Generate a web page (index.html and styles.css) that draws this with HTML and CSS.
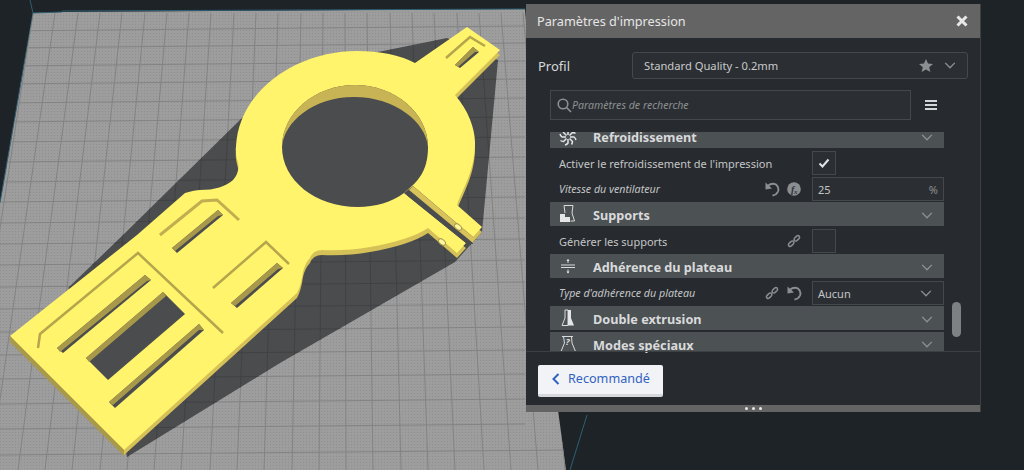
FILE: index.html
```html
<!DOCTYPE html>
<html lang="fr">
<head>
    <meta charset="UTF-8">
    <meta name="viewport" content="width=device-width, initial-scale=1.0">
    <title>Paramètres d'impression</title>
    <link rel="stylesheet" href="styles.css">
</head>
<body>
<div class="viewport">
    <svg class="scene" width="1024" height="470" viewBox="0 0 1024 470">
        <defs>
            <pattern id="fine" width="3" height="3" patternUnits="userSpaceOnUse">
                <rect width="3" height="3" fill="#9d9d9d"/>
                <rect width="1" height="1" fill="#8f8f8f"/>
            </pattern>
            <clipPath id="plateClip">
                <path d="M33 13 L62 12 L525 9 L558 410 L566 470 L0 470 L0 203 Z"/>
            </clipPath>
            <clipPath id="shadowClip">
                <path d="M127 457 L280 363 L455 262 L482 232 L498 60 L447 38 L378 52 L357 60 L242 118 L123 235 L68 288 L100 320 Z"/>
            </clipPath>
            <path id="partFace" fill-rule="evenodd" d="M10 336 L137 235 L185 193 Q195 190 200 190 Q222 190 233 180 Q240 172 238 163 Q235 152 236 147 C238 92 295 51 357 51 Q392 51 415 63 L467 27 L500 50 L455 95 C468 110 475 128 475 143 C475 170 463 188 457 205 L482 227 L473 237 L413 186 L404 193 L466 243 L457 253 L428 228 Q410 240 370 247 Q347 251 322 250 Q313 250 310 258 Q305 263 303 272 Q301 286 297 293 L124 450 Z"/>
        </defs>

        <!-- build plate -->
        <path d="M33 13 L62 12 L525 9 L558 410 L566 470 L0 470 L0 203 Z" fill="url(#fine)"/>
        <path class="plate-edge" d="M30 0 L33 13 L0 203 M33 13 L62 12 M62 11 L525 9 M587 415 L570 470"/>
        <g clip-path="url(#plateClip)">
            <path class="grid-lines" d="M33 13 L-37 470 M55 13 L-10 470 M78 13 L18 470 M100 13 L45 470 M122 13 L72 470 M145 13 L100 470 M167 13 L127 470 M189 13 L154 470 M211 13 L181 470 M234 13 L210 470 M256 13 L237 470 M278 13 L264 470 M301 13 L292 470 M323 13 L319 470 M345 13 L346 470 M367 13 L373 470 M390 13 L401 470 M412 13 L428 470 M434 13 L455 470 M457 13 L484 470 M479 13 L511 470 M501 13 L538 470 M523 13 L565 470
            M0 31 L525 26 M0 48 L525 43 M0 66 L525 61 M0 84 L525 79 M0 103 L525 98 M0 122 L525 117 M0 142 L525 137 M0 162 L525 157 M0 182 L525 177 M0 202 L525 197 M0 223 L525 218 M0 244 L525 239 M0 265 L525 260 M0 287 L525 282 M0 309 L525 304 M0 332 L525 327 M0 355 L525 350 M0 379 L525 374 M0 404 L525 399 M0 429 L525 424 M0 455 L570 450"/>
        </g>

        <!-- shadow under the part -->
        <path d="M127 457 L280 363 L455 262 L482 232 L498 60 L447 38 L378 52 L357 60 L242 118 L123 235 L68 288 L100 320 Z" fill="#4b4c4e"/>
        <g clip-path="url(#shadowClip)">
            <path class="grid-shadow" d="M78 13 L18 470 M100 13 L45 470 M122 13 L72 470 M145 13 L100 470 M167 13 L127 470 M189 13 L154 470 M211 13 L181 470 M234 13 L210 470 M256 13 L237 470 M278 13 L264 470 M301 13 L292 470 M323 13 L319 470 M345 13 L346 470 M367 13 L373 470 M390 13 L401 470 M412 13 L428 470 M434 13 L455 470 M457 13 L484 470 M479 13 L511 470
            M0 66 L525 61 M0 84 L525 79 M0 103 L525 98 M0 122 L525 117 M0 142 L525 137 M0 162 L525 157 M0 182 L525 177 M0 202 L525 197 M0 223 L525 218 M0 244 L525 239 M0 265 L525 260 M0 287 L525 282 M0 309 L525 304 M0 332 L525 327 M0 355 L525 350 M0 379 L525 374 M0 404 L525 399 M0 429 L525 424"/>
        </g>

        <!-- part: side faces, then the top face -->
        <use href="#partFace" class="part-side" transform="translate(0 5)"/>
        <use href="#partFace" class="part-top"/>
        <path class="part-edge" d="M10 336 L124 450 L124 456 L10 342 Z"/>
        <path class="part-slit" d="M404 193 L466 243 L473 244 L473 237 L413 186 Z"/>
        <path class="part-side-light" d="M413 186 L473 237 L473 243 L409 190 Z"/>
        <path class="part-hole" d="M282 147 C282 113 315 85 355 85 C395 85 428 113 428 147 C428 168 420 178 413 185 L404 193 C392 202 375 207 358 207 C315 207 282 180 282 147 Z"/>
        <path class="part-wall" fill-rule="evenodd" d="M282 147 C282 113 315 85 355 85 C395 85 428 113 428 147 C426 122 395 97 354 97 C313 97 284 122 282 147 Z"/>

        <!-- arm window -->
        <path class="groove" d="M446 58 L470 37 L485 46"/>
        <path class="slot" d="M455 65 L473 47 L479 52 L460 68 Z"/>
        <path class="slot-wall" d="M455 65 L473 47 L479 52 L475 52 L458 67 Z"/>

        <!-- slots in the plate part -->
        <path class="slot" d="M145 275 L151 280 L63 353 L57 348 Z"/>
        <path class="slot-wall" d="M145 275 L151 280 L147 281 L60 352 L57 348 Z"/>
        <path class="slot" d="M163 292 L185 314 L108 380 L86 358 Z"/>
        <path class="slot-wall" d="M163 292 L166 296 L89 362 L86 358 Z"/>
        <path class="slot" d="M199 324 L204 330 L115 408 L109 402 Z"/>
        <path class="slot-wall" d="M199 324 L204 330 L199 330 L113 405 L109 402 Z"/>
        <path class="slot" d="M277 263 L283 268 L237 308 L231 303 Z"/>
        <path class="slot-wall" d="M277 263 L283 268 L278 269 L235 306 L231 303 Z"/>
        <path class="slot" d="M218 210 L223 215 L177 253 L172 248 Z"/>
        <path class="slot-wall" d="M218 210 L223 215 L218 216 L175 251 L172 248 Z"/>

        <path class="groove" d="M38 348 L40 334 L138 253 L223 333"/>
        <path class="groove" d="M213 288 L266 242 L289 264"/>
        <path class="groove wide" d="M160 235 L202 201 L217 200 L239 220"/>

        <ellipse class="screw" cx="458" cy="227" rx="4" ry="2.5" transform="rotate(40 458 227)"/>
        <ellipse class="screw" cx="442" cy="242" rx="4" ry="2.5" transform="rotate(40 442 242)"/>
    </svg>

    <div class="panel">
        <div class="panel-title">
            <span>Paramètres d'impression</span>
            <svg class="close" width="12" height="12" viewBox="0 0 12 12"><path d="M1.5 1.5 L10.5 10.5 M10.5 1.5 L1.5 10.5"/></svg>
        </div>

        <div class="profile">
            <span class="profile-label">Profil</span>
            <div class="profile-combo">
                <span class="profile-name">Standard Quality - 0.2mm</span>
                <svg class="star" width="14" height="13" viewBox="0 0 14 13"><path d="M7 0 L9 4.5 L14 5 L10.2 8.2 L11.4 13 L7 10.4 L2.6 13 L3.8 8.2 L0 5 L5 4.5 Z"/></svg>
                <svg class="chevron" width="12" height="7" viewBox="0 0 13 8"><path d="M1 1 L6.5 6.5 L12 1"/></svg>
            </div>
        </div>

        <div class="search-row">
            <div class="search">
                <svg class="search-icon" width="15" height="15" viewBox="0 0 15 15"><circle cx="6" cy="6" r="4.8"/><path d="M9.5 9.5 L14 14"/></svg>
                <span>Paramètres de recherche</span>
            </div>
            <div class="burger"><i></i><i></i><i></i></div>
        </div>

        <div class="settings">
            <div class="settings-list">
                <div class="cat cat-top">
                    <svg class="cat-icon" width="18" height="14" viewBox="0 4 18 14"><path class="line fan" d="M9 7 L9 3 Q10 1.5 12 1 M11 9 L15 9 Q16.5 10 17 12 M9 11 L9 15 Q8 16.5 6 17 M7 9 L3 9 Q1.5 8 1 6 M10.5 7.5 L13.5 4.5 Q15 4.5 16.5 5.5 M10.5 10.5 L13.5 13.5 Q13.5 15 12.5 16.5 M7.5 10.5 L4.5 13.5 Q3 13.5 1.5 12.5 M7.5 7.5 L4.5 4.5 Q4.5 3 5.5 1.5"/></svg>
                    <span>Refroidissement</span>
                    <svg class="chevron" width="12" height="7" viewBox="0 0 13 8"><path d="M1 1 L6.5 6.5 L12 1"/></svg>
                </div>
                <div class="row">
                    <span class="row-label">Activer le refroidissement de l'impression</span>
                    <div class="check"><svg width="12" height="10" viewBox="0 0 12 10"><path d="M1.5 5.5 L4.5 8.5 L10.5 1.5"/></svg></div>
                </div>
                <div class="row">
                    <span class="row-label changed">Vitesse du ventilateur</span>
                    <svg class="tool" width="16" height="16" viewBox="0 0 16 16"><path d="M3.5 5 Q8 1.5 12 3.5 Q15.5 6.5 14 10.5 Q12.5 14 8.5 14.5"/><path class="solid" d="M1.5 1.5 L1.5 8.5 L8 7.5 Z"/></svg>
                    <svg class="tool tool-last fx" width="16" height="16" viewBox="0 0 16 16"><circle class="solid" cx="8" cy="8" r="6.8"/><text x="5" y="11.5">f</text><text class="x" x="8" y="12.5">x</text></svg>
                    <div class="field"><span>25</span><span class="unit">%</span></div>
                </div>
                <div class="cat">
                    <svg class="cat-icon" width="18" height="20" viewBox="0 0 18 20"><path class="solid" d="M1 18 L1 10 L6 10 L6 13 L11 13 L11 18 Z"/><path class="line" d="M5 1.5 L14 1.5 L13 9 L15.5 17 L11.5 17 M5 1.5 L6 9"/></svg>
                    <span>Supports</span>
                    <svg class="chevron" width="12" height="7" viewBox="0 0 13 8"><path d="M1 1 L6.5 6.5 L12 1"/></svg>
                </div>
                <div class="row">
                    <span class="row-label">Générer les supports</span>
                    <svg class="tool tool-last link" width="16" height="16" viewBox="0 0 16 16"><path d="M8.5 5.2 L10.6 3.1 Q12 1.9 13.2 3.1 Q14.2 4.4 13 5.6 L10.9 7.6 Q9.6 8.4 8.5 7.5 Q7.6 6.3 8.5 5.2 Z M2.9 10.6 L5.1 8.4 Q6.4 7.6 7.5 8.5 Q8.4 9.7 7.5 10.8 L5.4 12.9 Q4 14.1 2.8 12.9 Q1.8 11.6 2.9 10.6 Z"/></svg>
                    <div class="check"></div>
                </div>
                <div class="cat">
                    <svg class="cat-icon" width="18" height="18" viewBox="0 0 18 18"><path class="line" d="M2 8 L16 8 M2 10.5 L16 10.5 M9 2.5 L9 6 M9 12.5 L9 16"/><path class="solid" d="M7.5 4 L9 2 L10.5 4 Z M7.5 14.5 L9 16.5 L10.5 14.5 Z"/></svg>
                    <span>Adhérence du plateau</span>
                    <svg class="chevron" width="12" height="7" viewBox="0 0 13 8"><path d="M1 1 L6.5 6.5 L12 1"/></svg>
                </div>
                <div class="row">
                    <span class="row-label changed">Type d'adhérence du plateau</span>
                    <svg class="tool link" width="16" height="16" viewBox="0 0 16 16"><path d="M8.5 5.2 L10.6 3.1 Q12 1.9 13.2 3.1 Q14.2 4.4 13 5.6 L10.9 7.6 Q9.6 8.4 8.5 7.5 Q7.6 6.3 8.5 5.2 Z M2.9 10.6 L5.1 8.4 Q6.4 7.6 7.5 8.5 Q8.4 9.7 7.5 10.8 L5.4 12.9 Q4 14.1 2.8 12.9 Q1.8 11.6 2.9 10.6 Z"/></svg>
                    <svg class="tool tool-last" width="16" height="16" viewBox="0 0 16 16"><path d="M3.5 5 Q8 1.5 12 3.5 Q15.5 6.5 14 10.5 Q12.5 14 8.5 14.5"/><path class="solid" d="M1.5 1.5 L1.5 8.5 L8 7.5 Z"/></svg>
                    <div class="field">
                        <span>Aucun</span>
                        <svg class="chevron" width="12" height="7" viewBox="0 0 13 8"><path d="M1 1 L6.5 6.5 L12 1"/></svg>
                    </div>
                </div>
                <div class="cat">
                    <svg class="cat-icon" width="18" height="18" viewBox="0 0 18 18"><path class="line" d="M6 1 L9 1 L9 16.5 L3 16.5 L6 9 Z"/><path class="solid" d="M9 1 L12 1 L12 9 L15 16.5 L9 16.5 Z"/></svg>
                    <span>Double extrusion</span>
                    <svg class="chevron" width="12" height="7" viewBox="0 0 13 8"><path d="M1 1 L6.5 6.5 L12 1"/></svg>
                </div>
                <div class="cat cat-end">
                    <svg class="cat-icon" width="18" height="16" viewBox="0 0 18 16"><path class="line" d="M3 1.5 L14 1.5 M4.5 1.5 L5.5 8 L2 16.5 M12.5 1.5 L13 8 L16.5 16.5"/><text x="6.5" y="10">?</text></svg>
                    <span>Modes spéciaux</span>
                    <svg class="chevron" width="12" height="7" viewBox="0 0 13 8"><path d="M1 1 L6.5 6.5 L12 1"/></svg>
                </div>
            </div>
            <div class="scrollbar"></div>
        </div>

        <div class="panel-foot">
            <button class="btn-back" type="button">
                <svg width="8" height="12" viewBox="0 0 8 12"><path d="M6.5 1 L1.5 6 L6.5 11"/></svg>
                <span>Recommandé</span>
            </button>
        </div>

        <div class="resize-bar"><i></i><i></i><i></i></div>
    </div>
</div>
</body>
</html>
```

FILE: styles.css
```css
* {
    box-sizing: border-box;
}
html, body {
    margin: 0;
    height: 100%;
    overflow: hidden;
}
body {
    background-color: #1d2327;
    font-family: "Noto Sans", "Open Sans", sans-serif;
}
.viewport {
    position: relative;
    width: 1024px;
    height: 470px;
    overflow: hidden;
}
.scene {
    display: block;
}
.plate-edge {
    fill: none;
    stroke: #2f5f73;
    stroke-width: 1;
}
.grid-lines {
    fill: none;
    stroke: #838384;
    stroke-width: 1;
}
.grid-shadow {
    fill: none;
    stroke: #414244;
    stroke-width: 1;
}
.part-top {
    fill: #fff46b;
}
.part-side {
    fill: #d6c158;
}
.part-edge {
    fill: #a89a48;
}
.part-side-light {
    fill: #d8c25a;
}
.part-slit {
    fill: #4b4c4e;
}
.part-hole {
    fill: #4b4c4e;
}
.part-wall {
    fill: #c8b455;
}
.slot {
    fill: #4b4c4e;
}
.slot-wall {
    fill: #a8994a;
}
.groove {
    fill: none;
    stroke: #b5a54c;
    stroke-width: 2.5;
}
.groove.wide {
    stroke-width: 3;
    stroke: #c0ae50;
}
.screw {
    fill: #fff7a0;
    stroke: #a8994a;
    stroke-width: 1;
}

/* panel */
.panel {
    position: absolute;
    left: 526px;
    top: 4px;
    width: 455px;
    height: 408px;
    display: flex;
    flex-direction: column;
    background-color: #272b2f;
    border-right: 1px solid #3d4144;
}
.panel-title {
    flex: none;
    height: 34px;
    padding: 0 12px 0 11px;
    display: flex;
    align-items: center;
    justify-content: space-between;
    background-color: #646464;
    color: #e6e6e6;
    font-size: 12.7px;
}
.close path {
    fill: none;
    stroke: #e8e8e8;
    stroke-width: 3;
}
.profile {
    flex: none;
    height: 27px;
    margin: 14px 12px 0 12px;
    display: flex;
    align-items: center;
}
.profile-label {
    width: 94px;
    color: #d8d9da;
    font-size: 13px;
}
.profile-combo {
    flex: 1;
    height: 27px;
    padding: 0 11px;
    display: flex;
    align-items: center;
    border: 1px solid #43484b;
    border-radius: 3px;
    background-color: #2b2f33;
}
.profile-name {
    flex: 1;
    color: #c8cacb;
    font-size: 11.2px;
}
.star {
    margin-right: 11px;
    fill: #8c8f91;
}
.chevron {
    flex: none;
}
.chevron path {
    fill: none;
    stroke: #8c9092;
    stroke-width: 1.6;
}
.search-row {
    flex: none;
    height: 30px;
    margin: 11px 0 0 24px;
    display: flex;
    align-items: center;
}
.search {
    width: 361px;
    height: 30px;
    padding-left: 6px;
    display: flex;
    align-items: center;
    border: 1px solid #43484b;
    background-color: #2b2f33;
    color: #8d9092;
    font-size: 10.6px;
    font-style: italic;
}
.search-icon {
    fill: none;
    stroke: #8d9092;
    stroke-width: 1.6;
}
.burger {
    margin-left: 14px;
    width: 12px;
    display: flex;
    flex-direction: column;
    gap: 2px;
}
.burger i {
    display: block;
    height: 2px;
    background-color: #d5d6d7;
}
.settings {
    flex: none;
    height: 219px;
    margin-top: 12px;
    padding-left: 24px;
    display: flex;
}
.settings-list {
    flex: none;
    width: 394px;
}
.cat {
    height: 24px;
    margin-bottom: 2px;
    padding: 0 11px 0 7px;
    display: flex;
    align-items: center;
    background-color: #4c5154;
    color: #d9dadb;
    font-size: 12.7px;
    font-weight: 700;
}
.cat span {
    flex: 1;
    padding-top: 2px;
}
.cat .chevron {
    margin-top: 2px;
}
/* first and last categories are scrolled partly out of the list */
.cat-top {
    height: 16px;
    align-items: flex-start;
}
.cat-top span {
    padding-top: 0;
    line-height: 10px;
}
.cat-end {
    height: 19px;
    margin-bottom: 0;
    padding-top: 3px;
    align-items: flex-start;
}
.cat-end span {
    padding-top: 1px;
    line-height: 18px;
}
.cat-end .chevron {
    margin-top: 6px;
}
.cat-icon {
    flex: none;
    margin-right: 16px;
    margin-left: 2px;
    width: 18px;
}
.cat-icon .line {
    fill: none;
    stroke: #d9dadb;
    stroke-width: 1;
}
.cat-icon .fan {
    stroke: #e4e5e6;
    stroke-width: 1.5;
}
.cat-icon .solid {
    fill: #e4e5e6;
}
.cat-icon text {
    fill: #d9dadb;
    font-size: 9px;
    font-style: italic;
}
.row {
    height: 26px;
    padding-left: 9px;
    display: flex;
    align-items: center;
    color: #c3c5c6;
    font-size: 11px;
}
.row-label {
    flex: 1;
}
.row-label.changed {
    font-style: italic;
    font-size: 10.7px;
}
.tool {
    flex: none;
    margin-right: 6px;
    fill: none;
    stroke: #8b8e90;
    stroke-width: 1.9;
}
.tool-last {
    margin-right: 10px;
}
.tool .solid {
    fill: #8b8e90;
    stroke: none;
}
.fx text {
    fill: #30343a;
    stroke: none;
    font-size: 10px;
    font-style: italic;
    font-weight: 700;
    font-family: "Liberation Serif", serif;
}
.fx .x {
    font-size: 7px;
}
.link {
    stroke-width: 1.5;
}
.check {
    flex: none;
    width: 24px;
    height: 24px;
    margin-right: 108px;
    display: flex;
    align-items: center;
    justify-content: center;
    border: 1px solid #43484b;
    background-color: #2b2f33;
}
.check path {
    fill: none;
    stroke: #e2e3e4;
    stroke-width: 2;
}
.field {
    flex: none;
    width: 132px;
    height: 24px;
    padding: 0 5px 0 5px;
    display: flex;
    align-items: center;
    justify-content: space-between;
    border: 1px solid #43484b;
    background-color: #2b2f33;
    color: #c3c5c6;
    font-size: 11px;
}
.field .chevron {
    margin-right: 6px;
}
.unit {
    color: #8d9092;
}
.scrollbar {
    flex: none;
    width: 9px;
    height: 35px;
    margin: 170px 0 0 8px;
    border-radius: 5px;
    background-color: #7d8184;
}
.panel-foot {
    flex: 1;
    padding: 13px 0 0 12px;
    border-top: 1px solid #3d4144;
}
.btn-back {
    width: 125px;
    height: 32px;
    padding: 0 0 2px 14px;
    display: flex;
    align-items: center;
    gap: 8px;
    border: 0;
    border-bottom: 3px solid #d5d7dc;
    border-radius: 2px;
    background-color: #f2f3f6;
    color: #2f62c2;
    font-family: inherit;
    font-size: 12.6px;
}
.btn-back svg {
    fill: none;
    stroke: #2f62c2;
    stroke-width: 2;
}
.resize-bar {
    flex: none;
    height: 7px;
    display: flex;
    align-items: center;
    justify-content: center;
    gap: 4px;
    background-color: #646464;
}
.resize-bar i {
    width: 3px;
    height: 3px;
    border-radius: 50%;
    background-color: #e8e8e8;
}
```
